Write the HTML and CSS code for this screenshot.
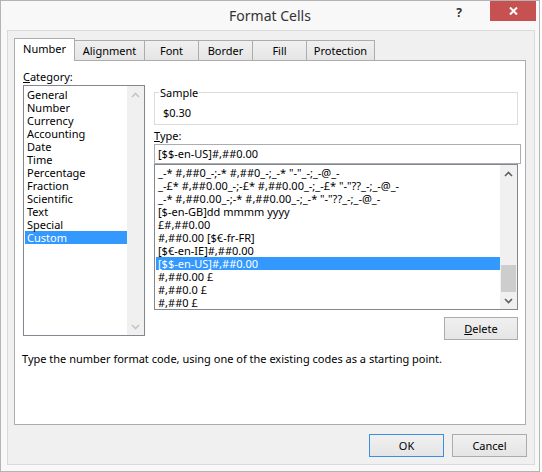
FILE: index.html
```html
<!DOCTYPE html>
<html>
<head>
<meta charset="utf-8">
<link rel="stylesheet" href="styles.css">
</head>
<body>
<div class="window">
  <div class="titlebar">
    <div></div>
    <div class="title">Format Cells</div>
    <div class="controls">
      <span class="help">?</span>
      <span class="close"><svg width="9" height="8" viewBox="0 0 9 8"><path d="M1 0.5 L8 7.5 M8 0.5 L1 7.5" stroke="#fff" stroke-width="2"/></svg></span>
    </div>
  </div>
  <div class="client">
    <div class="tabs">
      <div class="tab active w-number">Number</div>
      <div class="tab w-align">Alignment</div>
      <div class="tab w-small">Font</div>
      <div class="tab w-small">Border</div>
      <div class="tab w-small">Fill</div>
      <div class="tab w-prot">Protection</div>
    </div>
    <div class="panel">
      <div class="panel-main">
        <div class="left">
          <div class="label"><u>C</u>ategory:</div>
          <div class="listbox cat">
            <div class="items">
              <div class="row">General</div>
              <div class="row">Number</div>
              <div class="row">Currency</div>
              <div class="row">Accounting</div>
              <div class="row">Date</div>
              <div class="row">Time</div>
              <div class="row">Percentage</div>
              <div class="row">Fraction</div>
              <div class="row">Scientific</div>
              <div class="row">Text</div>
              <div class="row">Special</div>
              <div class="row sel">Custom</div>
            </div>
            <div class="vscroll disabled">
              <div class="arrow"><svg width="9" height="6" viewBox="0 0 9 6"><polyline points="1,5 4.5,1.5 8,5" fill="none" stroke-width="1.6"/></svg></div>
              <div class="track"></div>
              <div class="arrow"><svg width="9" height="6" viewBox="0 0 9 6"><polyline points="1,1 4.5,4.5 8,1" fill="none" stroke-width="1.6"/></svg></div>
            </div>
          </div>
        </div>
        <div class="right">
          <fieldset class="sample">
            <legend>Sample</legend>
            <div class="sample-value">$0.30</div>
          </fieldset>
          <div class="label type-label"><u>T</u>ype:</div>
          <div class="input">[$$-en-US]#,##0.00</div>
          <div class="listbox types">
            <div class="items">
              <div class="row">_-* #,##0_-;-* #,##0_-;_-* "-"_-;_-@_-</div>
              <div class="row">_-£* #,##0.00_-;-£* #,##0.00_-;_-£* "-"??_-;_-@_-</div>
              <div class="row">_-* #,##0.00_-;-* #,##0.00_-;_-* "-"??_-;_-@_-</div>
              <div class="row">[$-en-GB]dd mmmm yyyy</div>
              <div class="row">£#,##0.00</div>
              <div class="row">#,##0.00 [$€-fr-FR]</div>
              <div class="row">[$€-en-IE]#,##0.00</div>
              <div class="row sel">[$$-en-US]#,##0.00</div>
              <div class="row">#,##0.00 £</div>
              <div class="row">#,##0.0 £</div>
              <div class="row">#,##0 £</div>
            </div>
            <div class="vscroll">
              <div class="arrow"><svg width="9" height="6" viewBox="0 0 9 6"><polyline points="1,5 4.5,1.5 8,5" fill="none" stroke-width="1.6"/></svg></div>
              <div class="track"><div class="thumb"></div></div>
              <div class="arrow"><svg width="9" height="6" viewBox="0 0 9 6"><polyline points="1,1 4.5,4.5 8,1" fill="none" stroke-width="1.6"/></svg></div>
            </div>
          </div>
          <div class="btn delete"><span><u>D</u>elete</span></div>
        </div>
      </div>
      <div class="desc">Type the number format code, using one of the existing codes as a starting point.</div>
    </div>
    <div class="buttons">
      <div class="btn ok">OK</div>
      <div class="btn">Cancel</div>
    </div>
  </div>
</div>
</body>
</html>
```

FILE: styles.css
```css
body {
  margin: 0;
  background: #ffffff;
  font-family: "Noto Sans", "Liberation Sans", sans-serif;
  font-size: 11px;
  color: #000;
}

.window {
  width: 540px;
  height: 472px;
  box-sizing: border-box;
  border: 1px solid #b4b4b4;
  background: #f8f8f8;
  display: flex;
  flex-direction: column;
}

.titlebar {
  height: 29px;
  flex-shrink: 0;
  display: grid;
  grid-template-columns: 1fr auto 1fr;
}

.title {
  font-size: 14px;
  line-height: 29px;
  color: #333;
  white-space: nowrap;
}

.controls {
  display: flex;
  justify-content: flex-end;
  align-items: flex-start;
}

.help {
  width: 14px;
  text-align: center;
  font-weight: bold;
  font-size: 12px;
  line-height: 14px;
  margin-top: 5px;
  margin-right: 24px;
  color: #333;
}

.close {
  width: 46px;
  height: 20px;
  margin-right: 3px;
  background: #c75050;
  display: flex;
  align-items: center;
  justify-content: center;
}

.client {
  flex: 1;
  margin: 0 4px 6px 6px;
  border: 1px solid #dadada;
  background: #f0f0f0;
  padding: 7px 8px 7px 6px;
  display: flex;
  flex-direction: column;
}

.tabs {
  height: 22px;
  flex-shrink: 0;
  display: flex;
  align-items: flex-end;
}

.tab {
  box-sizing: border-box;
  height: 20px;
  border: 1px solid #acacac;
  border-bottom: none;
  background: linear-gradient(#f0f0f0, #e5e5e5);
  margin-left: -1px;
  display: flex;
  align-items: center;
  justify-content: center;
  white-space: nowrap;
}

.tab.active {
  height: 23px;
  margin-left: 0;
  margin-bottom: -1px;
  padding-bottom: 3px;
  background: #fff;
  position: relative;
  z-index: 1;
}

.w-number { width: 61px; }
.w-align { width: 71px; }
.w-small { width: 55px; }
.w-prot { width: 69px; }

.panel {
  box-sizing: border-box;
  height: 365px;
  flex-shrink: 0;
  border: 1px solid #acacac;
  background: #fff;
  padding: 9px 7px 0 8px;
}

.panel-main {
  display: grid;
  grid-template-columns: 122px 364px;
  column-gap: 9px;
  align-items: start;
}

.label {
  line-height: 13px;
  white-space: nowrap;
}

.listbox {
  box-sizing: border-box;
  border: 1px solid #828790;
  background: #fff;
  display: flex;
}

.listbox.cat {
  height: 251px;
  margin-top: 2px;
}

.listbox .items {
  flex: 1;
  min-width: 0;
  overflow: hidden;
  padding: 2px 0 0 1px;
}

.row {
  height: 13px;
  line-height: 13px;
  padding-left: 2px;
  white-space: nowrap;
}

.row.sel {
  background: #3399ff;
  color: #fff;
}

.vscroll {
  width: 17px;
  flex-shrink: 0;
  background: #f0f0f0;
  display: flex;
  flex-direction: column;
}

.vscroll .arrow {
  height: 17px;
  display: flex;
  align-items: center;
  justify-content: center;
}

.vscroll .arrow polyline { stroke: #606060; }
.vscroll.disabled .arrow polyline { stroke: #c4c4c4; }

.vscroll .track {
  flex: 1;
  display: flex;
  flex-direction: column;
  justify-content: flex-end;
}

.thumb {
  height: 27px;
  margin: 0 1px;
  background: #cdcdcd;
}

.right {
  margin-top: 16px;
  display: flex;
  flex-direction: column;
}

.sample {
  margin: 0;
  min-width: 0;
  box-sizing: border-box;
  width: 364px;
  border: 1px solid #dcdcdc;
  padding: 7px 0 5px 4px;
}

.sample legend {
  padding: 0 1px;
  line-height: 13px;
}

.sample-value {
  padding-left: 4px;
  line-height: 13px;
}

.type-label {
  margin-top: 4px;
}

.input {
  box-sizing: border-box;
  width: 367px;
  height: 20px;
  margin-top: 2px;
  border: 1px solid #abadb3;
  background: #fff;
  padding: 0 3px;
  line-height: 18px;
  white-space: nowrap;
}

.listbox.types {
  width: 364px;
  height: 146px;
}

.listbox.types .items {
  padding: 1px 0 0 1px;
}

.btn {
  box-sizing: border-box;
  width: 75px;
  height: 23px;
  border: 1px solid #acacac;
  background: linear-gradient(#f0f0f0, #e5e5e5);
  display: flex;
  align-items: center;
  justify-content: center;
}

.btn.delete {
  width: 74px;
  margin-top: 7px;
  align-self: flex-end;
}

.btn.ok {
  border-color: #3c8fe0;
}

.desc {
  margin-top: 12px;
  margin-left: -1px;
  line-height: 13px;
  white-space: nowrap;
}

.buttons {
  margin-top: 9px;
  margin-right: -1px;
  display: flex;
  justify-content: flex-end;
  gap: 8px;
}
```
